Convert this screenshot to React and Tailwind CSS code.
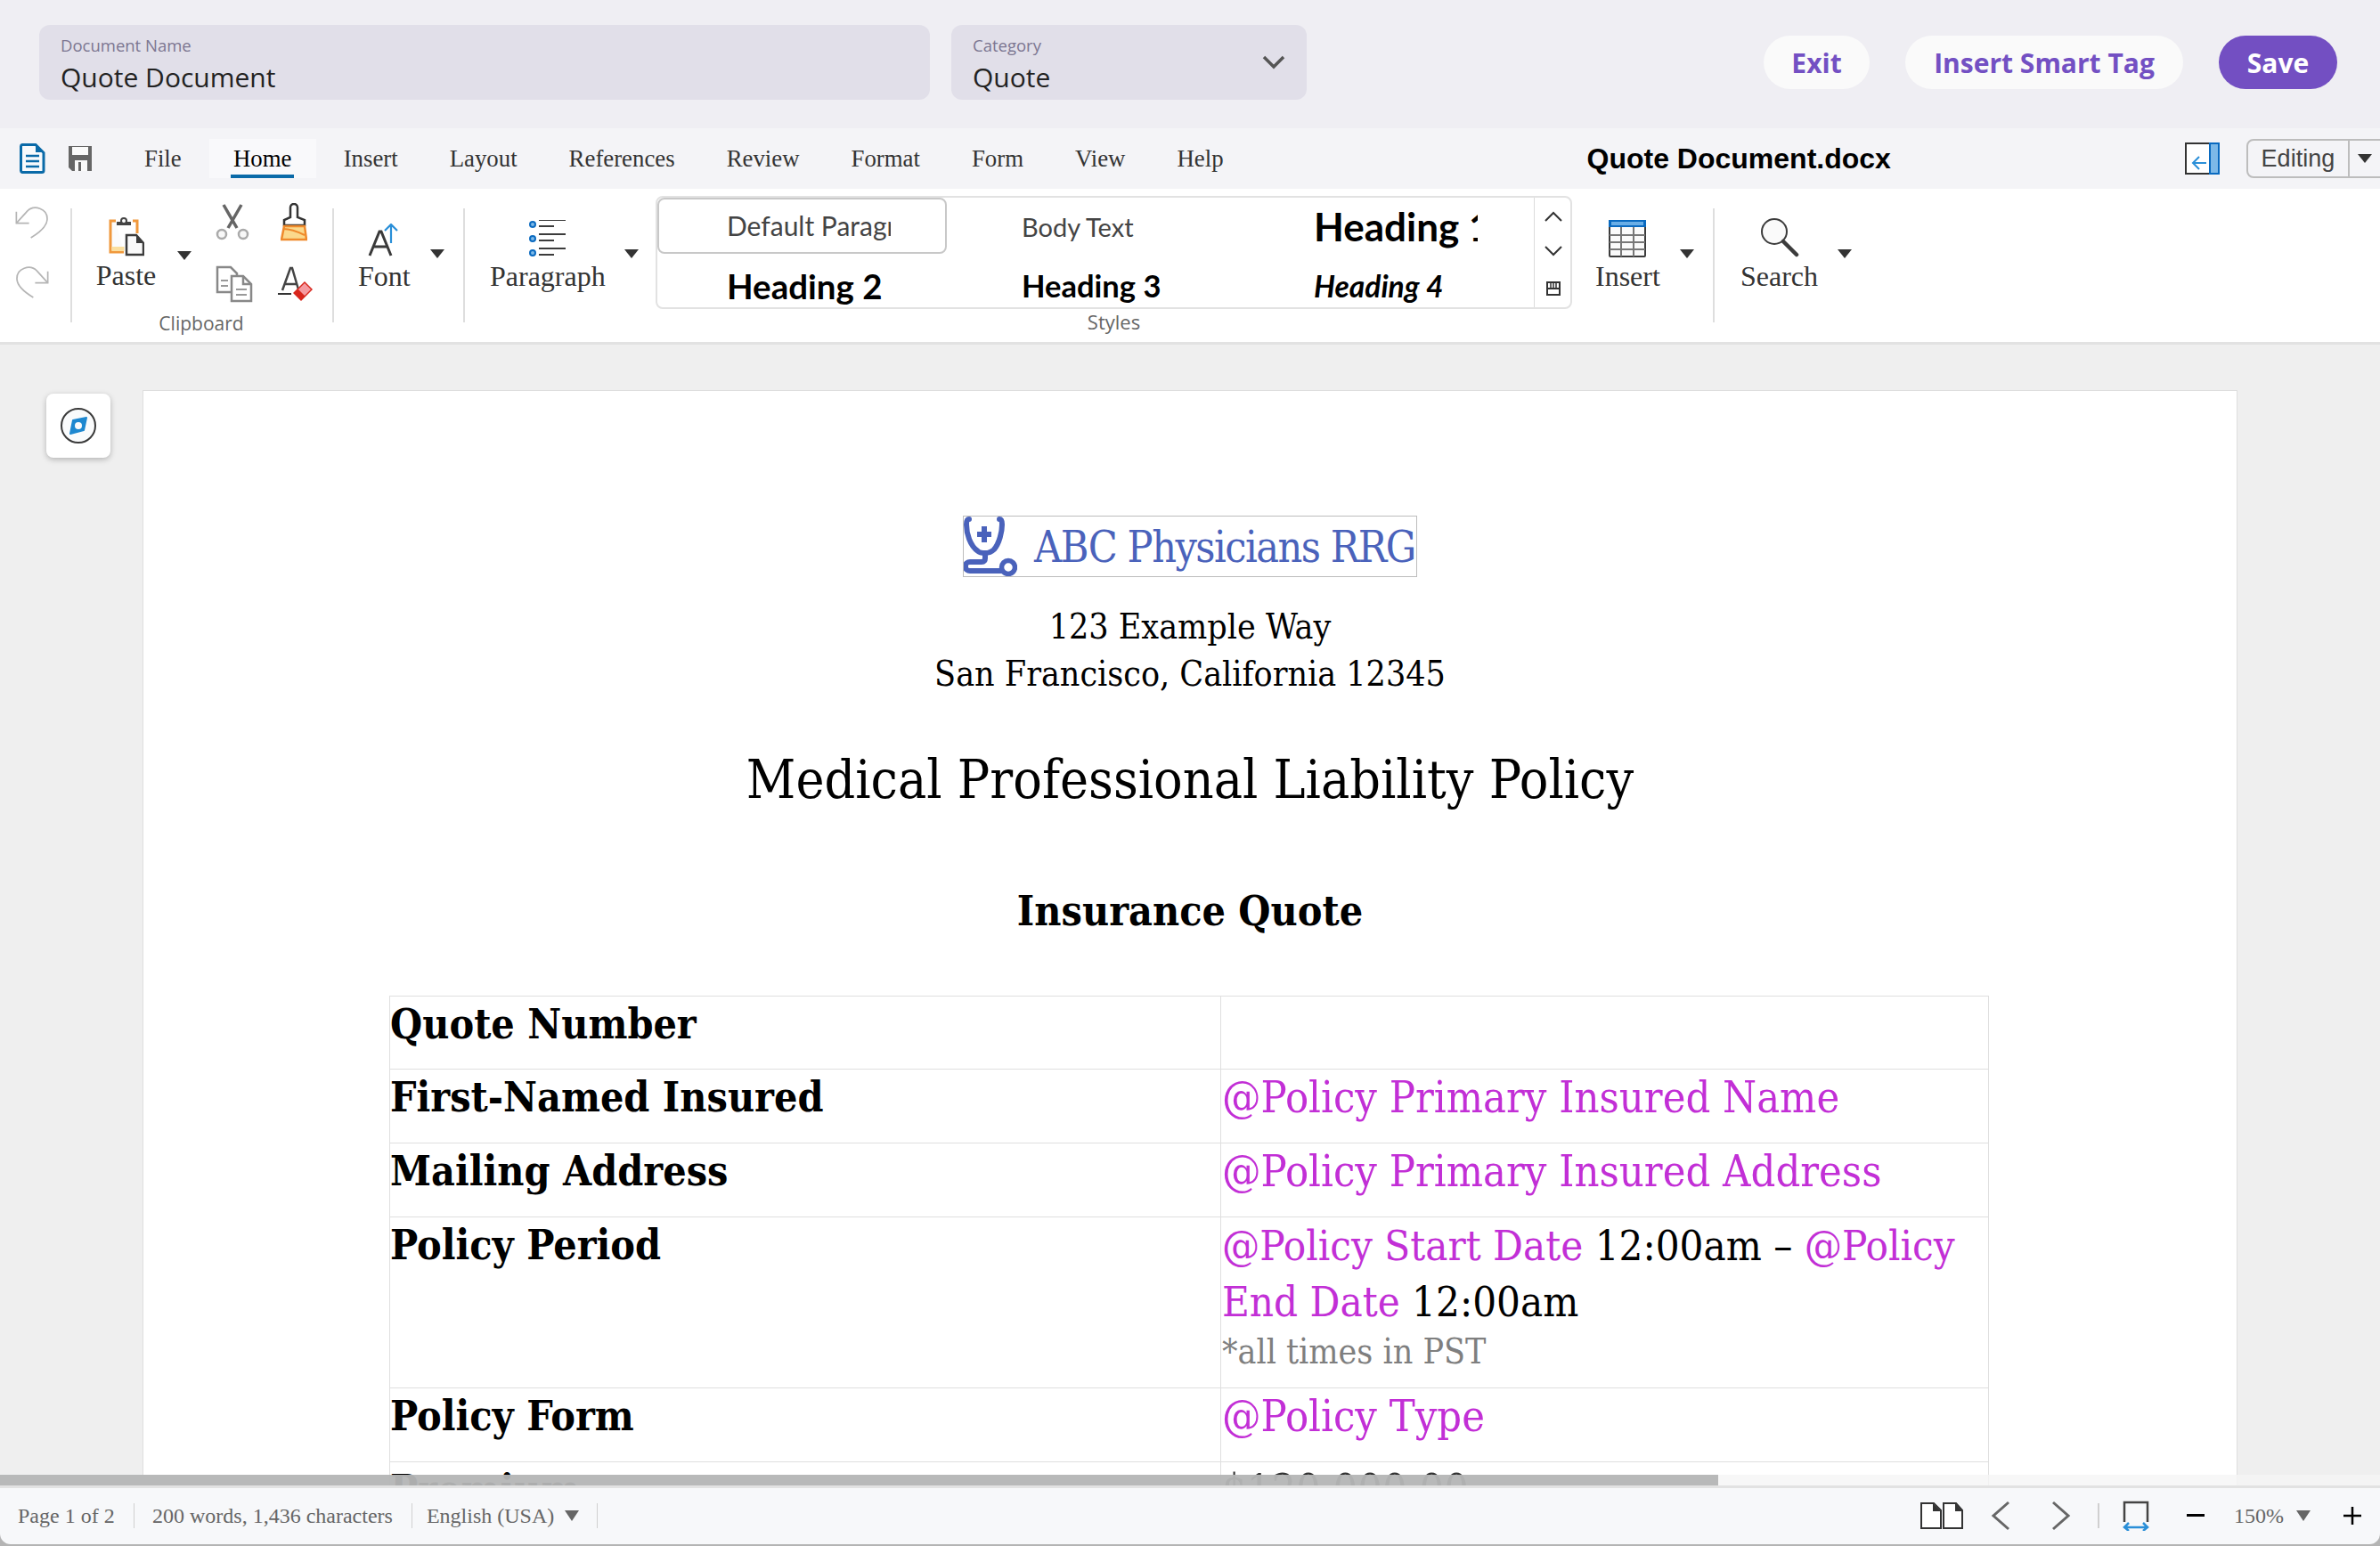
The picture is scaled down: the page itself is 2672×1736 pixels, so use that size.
import React from "react";

const Caret = ({ className = "" }) => (
  <svg width="16" height="10" viewBox="0 0 16 10" className={`shrink-0 ${className}`}><polygon points="0,0 16,0 8,10" fill="#333" /></svg>
);

const DocIcon = () => (
  <svg width="30" height="34" viewBox="0 0 30 34" fill="none" className="shrink-0">
    <path d="M3 1.500h15l9 9v20a2 2 0 0 1-2 2H3a2 2 0 0 1-1.500-2V3.500a2 2 0 0 1 1.500-2z" stroke="#0a6aa8" strokeWidth="3" fill="#f8fafc" />
    <path d="M18 1l9 9h-9z" fill="#0a6aa8" />
    <path d="M7 14h15M7 20h15M7 26h15" stroke="#0a6aa8" strokeWidth="2.500" />
  </svg>
);
const SaveIcon = () => (
  <svg width="28" height="30" viewBox="0 0 28 30" className="shrink-0">
    <path d="M1 1h26v28H5l-4-4z" fill="#666" />
    <rect x="5" y="2" width="18" height="9" fill="#fafafa" />
    <rect x="8" y="17" width="14" height="12" fill="#fafafa" />
    <rect x="12" y="19" width="3" height="10" fill="#666" />
  </svg>
);
const Undo = ({ flip }) => (
  <svg width="38" height="38" viewBox="0 0 112 112" fill="none" className={flip ? "-scale-x-100" : ""}>
    <path d="M4 20V58H46" stroke="#b5b5b5" strokeWidth="5" />
    <path d="M4 58L40 18C62 -4 108 8 106 46C105 64 92 82 52 106" stroke="#b5b5b5" strokeWidth="5" />
  </svg>
);
const PasteIcon = () => (
  <svg width="40" height="44" viewBox="0 0 40 44" fill="none">
    <path d="M8 4H2v35h15" stroke="#f0983c" strokeWidth="3" fill="#fbfbfb" />
    <path d="M27 4h5v14" stroke="#f0983c" strokeWidth="3" />
    <rect x="3.500" y="33" width="14" height="5" fill="#fbdf9e" />
    <rect x="9" y="5" width="16" height="4" fill="#444" />
    <circle cx="17" cy="4" r="3" fill="#fff" stroke="#444" strokeWidth="2" />
    <path d="M20 20h11l8 9v13H20z" fill="#fafafa" stroke="#3c3c3c" strokeWidth="2.500" />
    <path d="M31 20v9h8z" fill="#3c3c3c" />
  </svg>
);
const Scissors = () => (
  <svg width="38" height="42" viewBox="0 0 38 42" fill="none">
    <path d="M9 1l15 26M29 1L14 27" stroke="#666" strokeWidth="3.500" />
    <circle cx="7" cy="34" r="5" stroke="#aaa" strokeWidth="2.500" fill="#f8f8f8" />
    <circle cx="31" cy="34" r="5" stroke="#aaa" strokeWidth="2.500" fill="#f8f8f8" />
  </svg>
);
const Brush = () => (
  <svg width="30" height="44" viewBox="0 0 30 44" fill="none">
    <path d="M11 16V5a4 4 0 0 1 8 0v11l8 3v6H4v-6z" stroke="#333" strokeWidth="2.500" fill="#fff" />
    <path d="M4 26h23l2 15H1z" fill="#fbd98c" stroke="#ef8a2c" strokeWidth="2.500" />
    <path d="M3 29c8 0 14 2 24 7" stroke="#ef8a2c" strokeWidth="2" />
  </svg>
);
const CopyIcon = () => (
  <svg width="42" height="42" viewBox="0 0 42 42" fill="none">
    <path d="M2 2h15l7 7v21H2z" stroke="#888" strokeWidth="2.500" fill="#fff" />
    <path d="M6 17h8M6 23h8" stroke="#999" strokeWidth="2" />
    <path d="M18 12h13l9 9v19H18z" stroke="#888" strokeWidth="2.500" fill="#fff" />
    <path d="M31 12v9h9" stroke="#888" strokeWidth="2.500" />
    <path d="M23 27h12M23 33h12" stroke="#999" strokeWidth="2" />
  </svg>
);
const Eraser = () => (
  <svg width="40" height="40" viewBox="0 0 40 40" fill="none" className="-ml-[3px] -mt-[1px]">
    <path d="M5 27L14 2h2l7 24M8 20h13" stroke="#444" strokeWidth="2.500" />
    <path d="M0 31h15" stroke="#333" strokeWidth="2" />
    <path d="M30 17l9 9-13 13-9-9z" fill="#d8261c" />
    <path d="M30 19l7 7-7 7-7-7z" fill="#f59aa0" />
  </svg>
);
const FontIcon = () => (
  <svg width="36" height="38" viewBox="0 0 36 38" fill="none">
    <path d="M2 36L13 9h2l11 27M6 26h16" stroke="#3a3a3a" strokeWidth="3" />
    <path d="M26 22V1M19 8l7-7 7 7" stroke="#2a8fd8" strokeWidth="2.200" />
  </svg>
);
const ParaIcon = () => (
  <svg width="42" height="42" viewBox="0 0 42 42" fill="none">
    {[6, 22, 38].map((y) => (
      <g key={y}>
        <circle cx="4" cy={y - 1} r="3" fill="#7db9e8" stroke="#0a6ac0" strokeWidth="2" />
        <path d={`M11 ${y - 6}H41`} stroke="#3c3c3c" strokeWidth="2" />
        <path d={`M11 ${y + 1}H28`} stroke="#3c3c3c" strokeWidth="2" />
      </g>
    ))}
  </svg>
);
const TableIcon = () => (
  <svg width="42" height="42" viewBox="0 0 42 42" fill="none">
    <rect x="1" y="1" width="40" height="40" rx="1" fill="#fafafa" stroke="#3c3c3c" strokeWidth="2" />
    <path d="M1 17h40M1 25h40M1 33h40M14 8v33M28 8v33" stroke="#777" strokeWidth="2" />
    <rect x="0" y="0" width="42" height="8" fill="#0a6ac0" />
    <rect x="3" y="2" width="36" height="4" fill="#6aaee6" />
  </svg>
);
const SearchIcon = () => (
  <svg width="44" height="44" viewBox="0 0 44 44" fill="none">
    <circle cx="16" cy="15" r="14" fill="#fafafa" stroke="#3c3c3c" strokeWidth="2" />
    <path d="M26 26l15 15" stroke="#3c3c3c" strokeWidth="4.500" strokeLinecap="round" />
  </svg>
);
const Compass = () => (
  <svg width="42" height="42" viewBox="0 0 42 42" fill="none">
    <circle cx="21" cy="21" r="19" stroke="#3a3a3a" strokeWidth="2" fill="#fafbfc" />
    <path d="M30 12L27 26 12 30 15 15z" fill="#1e88d0" stroke="#1e88d0" strokeWidth="2" strokeLinejoin="round" />
    <circle cx="21" cy="21" r="4" fill="#fafbfc" />
  </svg>
);
const Logo = () => (
  <svg width="60" height="67" viewBox="0 0 60 67" fill="none" className="shrink-0">
    <path d="M6 3c-3 0-3 3-3 6 0 10 4 24 13 30 2 2 5 2 8 2 4 0 7-1 10-4 6-7 9-20 9-28 0-3 0-6-3-6" stroke="#4a62bb" strokeWidth="6" strokeLinecap="round" />
    <path d="M23 11v18M15 20h16" stroke="#4a62bb" strokeWidth="6" />
    <path d="M24 42v5c0 2-1 4-4 4H7c-3 0-5 2-5 4v2c0 2 2 4 5 4h36" stroke="#4a62bb" strokeWidth="6" />
    <circle cx="50" cy="57" r="7.500" stroke="#4a62bb" strokeWidth="5.500" />
  </svg>
);

const Sep = ({ className = "" }) => <div className={`w-[2px] h-[128px] mt-[22px] bg-[#dedede] shrink-0 ${className}`} />;

const Big = ({ icon, label }) => (
  <div className="flex flex-col items-center">
    <div className="h-[44px] flex items-end justify-center">{icon}</div>
    <div className="text-[32px] leading-[40px] text-[#333] mt-[1px] whitespace-nowrap">{label}</div>
  </div>
);

const menu = ["Insert", "Layout", "References", "Review", "Format", "Form", "View", "Help"];

const Th = ({ children }) => (
  <td className="align-top border border-[#dfdfdf] p-0 font-bold text-black text-[46.200px]">{children}</td>
);
const Tag = ({ children }) => <span className="text-[#c22fd6]">{children}</span>;

export default function App() {
  return (
    <div className="w-[2672px] h-[1736px] overflow-hidden flex flex-col font-['Liberation_Serif',serif] bg-[#b4b4b4]">
      {/* top header */}
      <header className="h-[144px] shrink-0 bg-[#efeef3] flex items-start pt-[28px] pl-[44px] pr-[48px] font-['Open_Sans',sans-serif]">
        <div className="w-[1000px] h-[84px] rounded-[12px] bg-[#e1dfe9] pl-[24px] pt-[11px]">
          <div className="text-[18.500px] leading-[24px] text-[#7c7691]">Document Name</div>
          <div className="text-[30px] leading-[40px] mt-[4px] text-[#222]">Quote Document</div>
        </div>
        <div className="w-[399px] h-[84px] ml-[24px] rounded-[12px] bg-[#e1dfe9] pl-[24px] pr-[24px] pt-[11px] flex justify-between">
          <div>
            <div className="text-[18.500px] leading-[24px] text-[#7c7691]">Category</div>
            <div className="text-[30px] leading-[40px] mt-[4px] text-[#222]">Quote</div>
          </div>
          <svg width="26" height="16" viewBox="0 0 26 16" fill="none" className="mt-[23px]"><path d="M2 2l11 11L24 2" stroke="#555" strokeWidth="3.500" /></svg>
        </div>
        <div className="ml-auto mt-[12px] flex items-center gap-[40px] font-bold text-[30px]">
          <button className="h-[60px] w-[119px] rounded-full bg-[#fafafa] text-[#7350c3]">Exit</button>
          <button className="h-[60px] w-[312px] rounded-full bg-[#fafafa] text-[#7350c3]">Insert Smart Tag</button>
          <button className="h-[60px] w-[133px] rounded-full bg-[#734fc2] text-white">Save</button>
        </div>
      </header>

      {/* menu bar */}
      <div className="h-[68px] shrink-0 bg-[#f4f4f7] flex items-center pl-[22px] text-[26.800px] text-[#333] overflow-hidden">
        <DocIcon />
        <div className="ml-[24px]"><SaveIcon /></div>
        <span className="ml-[58px]">File</span>
        <div className="ml-[31px] w-[120px] h-[44px] bg-[#f9f9fb] flex justify-center shrink-0">
          <span className="w-[71px] h-[44px] text-center leading-[44px] border-b-[4px] border-[#0a6aa8] text-black">Home</span>
        </div>
        <div className="ml-[31px] flex gap-[58px]">
          {menu.map((m) => <span key={m}>{m}</span>)}
        </div>
        <div className="ml-[408px] font-['Liberation_Sans',sans-serif] font-bold text-[32px] text-black whitespace-nowrap">Quote Document.docx</div>
        <svg width="39" height="36" viewBox="0 0 39 36" fill="none" className="ml-[330px] shrink-0">
          <rect x="1" y="1" width="37" height="34" fill="#fff" stroke="#333" strokeWidth="2" />
          <rect x="28" y="1" width="10" height="34" fill="#7db9e8" stroke="#0a6ac0" strokeWidth="2" />
          <path d="M24 23H10M16 16l-7 7 7 7" stroke="#2a8fd8" strokeWidth="2" />
        </svg>
        <div className="ml-[30px] w-[170px] h-[44px] shrink-0 rounded-[8px] border-[2px] border-[#bdbdbd] flex items-center font-['Liberation_Sans',sans-serif] text-[27px] text-[#444]">
          <span className="w-[112px] text-center">Editing</span>
          <span className="w-[2px] h-full bg-[#bdbdbd]" />
          <Caret className="ml-[9px]" />
        </div>
      </div>

      {/* ribbon */}
      <div className="h-[175px] shrink-0 bg-white border-b-[3px] border-[#e2e2e2] flex items-start">
        <div className="w-[79px] pl-[17px] pt-[19px] flex flex-col gap-[29px] shrink-0">
          <Undo />
          <Undo flip />
        </div>
        <Sep />
        <div className="w-[292px] shrink-0 flex flex-col">
          <div className="flex items-start h-[134px]">
            <div className="ml-[27px] w-[67px] mt-[32px]">
              <Big icon={<PasteIcon />} label="Paste" />
            </div>
            <Caret className="ml-[24px] mt-[70px]" />
            <div className="ml-[27px] mt-[16px] grid grid-cols-[73px_40px] gap-y-[26px] items-center">
              <Scissors />
              <Brush />
              <CopyIcon />
              <Eraser />
            </div>
          </div>
          <div className="font-['Open_Sans',sans-serif] text-[21px] leading-[30px] text-[#666] text-center pl-[14px] pr-[16px] mt-[2px]">Clipboard</div>
        </div>
        <Sep />
        <div className="w-[145px] shrink-0 flex items-start pl-[27px] mt-[33px]">
          <Big icon={<FontIcon />} label="Font" />
          <Caret className="ml-[22px] mt-[35px]" />
        </div>
        <Sep />
        <div className="w-[214px] shrink-0 flex items-start pl-[28px] mt-[33px]">
          <Big icon={<ParaIcon />} label="Paragraph" />
          <Caret className="ml-[21px] mt-[35px]" />
        </div>
        <div className="w-[1029px] shrink-0 flex flex-col mt-[8px]">
          <div className="h-[127px] rounded-[8px] border-[2px] border-[#e2e2e2] flex font-['Lato',sans-serif] text-black">
            <div className="flex-1 grid grid-cols-[330px_330px_1fr] grid-rows-[63px_1fr]">
              <div className="border-[2px] border-[#c8c8c8] rounded-[8px] pl-[76px] mr-[5px] flex items-center text-[30px] text-[#444] overflow-hidden"><span className="w-[184px] overflow-hidden whitespace-nowrap">Default Paragraph</span></div>
              <div className="pl-[79px] flex items-center text-[29px] text-[#444] pt-[2px]">Body Text</div>
              <div className="pl-[77px] flex items-center font-bold text-[44px]"><span className="w-[184px] overflow-hidden whitespace-nowrap">Heading 1</span></div>
              <div className="pl-[78px] flex items-center font-bold text-[38.500px] pt-[8px]">Heading 2</div>
              <div className="pl-[79px] flex items-center font-bold text-[34.500px] pt-[6px]">Heading 3</div>
              <div className="pl-[77px] flex items-center font-bold italic text-[33.500px] pt-[6px]">Heading 4</div>
            </div>
            <div className="w-[41px] border-l-[1px] border-[#dcdcdc] flex flex-col items-center pl-[2px] pt-[15px] gap-[27px] shrink-0">
              <svg width="22" height="12" viewBox="0 0 22 12" fill="none"><path d="M2 11l9-9 9 9" stroke="#333" strokeWidth="2" /></svg>
              <svg width="22" height="12" viewBox="0 0 22 12" fill="none"><path d="M2 1l9 9 9-9" stroke="#333" strokeWidth="2" /></svg>
              <svg width="16" height="16" viewBox="0 0 16 16" fill="none" className="mt-[1px]"><rect x="1" y="1" width="14" height="14" stroke="#333" strokeWidth="2" /><path d="M1 8h14" stroke="#333" strokeWidth="2" /><path d="M5 2v5M8 2v5M11 2v5" stroke="#333" strokeWidth="1.500" /></svg>
            </div>
          </div>
          <div className="font-['Open_Sans',sans-serif] text-[22px] leading-[28px] text-[#666] text-center">Styles</div>
        </div>
        <div className="w-[158px] shrink-0 flex items-start pl-[26px] mt-[33px]">
          <Big icon={<TableIcon />} label="Insert" />
          <Caret className="ml-[22px] mt-[35px]" />
        </div>
        <Sep />
        <div className="flex items-start pl-[29px] mt-[33px]">
          <Big icon={<SearchIcon />} label="Search" />
          <Caret className="ml-[22px] mt-[35px]" />
        </div>
      </div>

      {/* canvas */}
      <main className="relative flex-1 min-h-0 overflow-hidden bg-[#efefef] flex items-start">
        <div className="w-[160px] shrink-0 pl-[52px] pt-[55px]">
          <div className="w-[72px] h-[72px] rounded-[8px] bg-white shadow-[0_2px_6px_rgba(0,0,0,0.25)] flex items-center justify-center"><Compass /></div>
        </div>
        <div className="w-[2352px] h-[1500px] shrink-0 mt-[51px] bg-white border border-[#dedede] flex flex-col items-center pt-[140px] font-['DejaVu_Serif_Condensed','DejaVu_Serif',serif] text-black">
          <div className="w-[510px] h-[69px] border-[1.500px] border-[#bdbdbd] flex items-center gap-[19px] overflow-hidden">
            <Logo />
            <span className="text-[#4a62bb] text-[48px] leading-none tracking-[-1.500px] whitespace-nowrap">ABC Physicians RRG</span>
          </div>
          <div className="text-[39px] leading-[53px] mt-[29px] text-center">
            <div>123 Example Way</div>
            <div>San Francisco, California 12345</div>
          </div>
          <div className="text-[60.300px] leading-[80px] mt-[52px]">Medical Professional Liability Policy</div>
          <div className="text-[46.200px] leading-[60px] mt-[78px] font-bold">Insurance Quote</div>
          <table className="table-fixed border-collapse w-[1796px] mt-[65px] text-[48.400px] leading-[63px] -ml-[2px]">
            <colgroup><col className="w-[933px]" /><col /></colgroup>
            <tbody>
              <tr className="h-[82px]"><Th>Quote Number</Th><td className="border border-[#dfdfdf]" /></tr>
              <tr className="h-[83px]"><Th>First-Named Insured</Th><td className="align-top border border-[#dfdfdf] pl-[1px]"><Tag>@Policy Primary Insured Name</Tag></td></tr>
              <tr className="h-[83px]"><Th>Mailing Address</Th><td className="align-top border border-[#dfdfdf] pl-[1px]"><Tag>@Policy Primary Insured Address</Tag></td></tr>
              <tr className="h-[192px]">
                <Th>Policy Period</Th>
                <td className="align-top border border-[#dfdfdf] pl-[1px] text-[47px]">
                  <Tag>@Policy Start Date</Tag> 12:00am – <Tag>@Policy End Date</Tag> 12:00am
                  <div className="text-[39px] leading-[50px] text-[#7f7f7f]">*all times in PST</div>
                </td>
              </tr>
              <tr className="h-[83px]"><Th>Policy Form</Th><td className="align-top border border-[#dfdfdf] pl-[1px]"><Tag>@Policy Type</Tag></td></tr>
              <tr className="h-[83px]"><Th>Premium</Th><td className="align-top border border-[#dfdfdf] pl-[1px] text-[#333]">$120,000.00</td></tr>
            </tbody>
          </table>
        </div>
        {/* overlay scrollbar */}
        <div className="absolute left-0 right-0 bottom-0 h-[12px] bg-[rgba(245,245,245,0.8)]">
          <div className="w-[1929px] h-full bg-[rgba(165,166,167,0.77)]" />
        </div>
      </main>

      {/* status bar */}
      <footer className="h-[66px] shrink-0 mb-[2px] rounded-b-[12px] bg-[#f7f8fa] border-t-[3px] border-[#e2e2e2] flex items-center pl-[20px] pb-[2px] text-[24px] text-[#666]">
        <span className="w-[130px]">Page 1 of 2</span>
        <span className="w-[1px] h-[28px] bg-[#d0d0d0]" />
        <span className="ml-[20px] whitespace-nowrap">200 words, 1,436 characters</span>
        <span className="ml-[21px] w-[1px] h-[28px] bg-[#d0d0d0]" />
        <span className="ml-[16px] whitespace-nowrap">English (USA)</span>
        <svg width="16" height="12" viewBox="0 0 16 12" className="ml-[12px]"><polygon points="0,0 16,0 8,12" fill="#666" /></svg>
        <span className="ml-[20px] w-[1px] h-[28px] bg-[#d0d0d0]" />
        <div className="ml-auto flex items-center pr-[20px]">
          <svg width="48" height="30" viewBox="0 0 48 30" fill="none"><path d="M1 1h14l8 8v20H1zM26 1h14l7 8v20H26z" fill="#fff" stroke="#333" strokeWidth="2" /><path d="M14 1l9 9h-9zM39 1l8 9h-8z" fill="#333" /></svg>
          <svg width="22" height="34" viewBox="0 0 22 34" fill="none" className="ml-[31px]"><path d="M20 2L3 17l17 15" stroke="#666" strokeWidth="3" /></svg>
          <svg width="22" height="34" viewBox="0 0 22 34" fill="none" className="ml-[46px]"><path d="M2 2l17 15L2 32" stroke="#666" strokeWidth="3" /></svg>
          <span className="ml-[30px] w-[2px] h-[28px] bg-[#d0d0d0]" />
          <svg width="30" height="34" viewBox="0 0 30 34" fill="none" className="ml-[26px]"><path d="M2 24V2h26v22" stroke="#444" strokeWidth="2.500" /><path d="M2 30h26M7 25l-5 5 5 4M23 25l5 5-5 4" stroke="#2a8fd8" strokeWidth="2.500" /></svg>
          <span className="ml-[42px] w-[20px] h-[2.500px] bg-black" />
          <span className="ml-[33px]">150%</span>
          <svg width="16" height="12" viewBox="0 0 16 12" className="ml-[14px]"><polygon points="0,0 16,0 8,12" fill="#666" /></svg>
          <svg width="22" height="22" viewBox="0 0 22 22" fill="none" className="ml-[36px]"><path d="M11 1v20M1 11h20" stroke="#000" strokeWidth="2.500" /></svg>
        </div>
      </footer>
    </div>
  );
}
